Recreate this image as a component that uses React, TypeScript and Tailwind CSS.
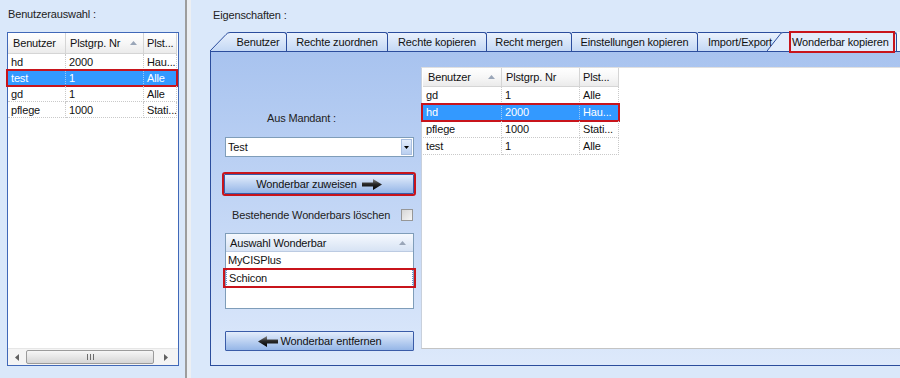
import React from "react";

type Col = { w: number; label: string; sort?: boolean; pl?: number };

function SortUp() {
  return (
    <svg width="7" height="4" viewBox="0 0 7 4" className="shrink-0">
      <path d="M0 4 L3.5 0 L7 4Z" fill="#9aa6b8" />
    </svg>
  );
}

function ArrowIcon({ dir, id }: { dir: "left" | "right"; id: string }) {
  return (
    <svg width="20" height="11" viewBox="0 0 20 11" className={dir === "left" ? "-scale-x-100" : ""}>
      <defs>
        <linearGradient id={id} x1="0" y1="0" x2="0" y2="1">
          <stop offset="0" stopColor="#8a8a8a" />
          <stop offset="0.45" stopColor="#2a2a2a" />
          <stop offset="1" stopColor="#000" />
        </linearGradient>
      </defs>
      <path d="M0 3.5 H11 V0 L20 5.5 L11 11 V7.5 H0 Z" fill={`url(#${id})`} />
    </svg>
  );
}

const leftCols: Col[] = [
  { w: 58, label: "Benutzer", pl: 5 },
  { w: 78, label: "Plstgrp. Nr", sort: true, pl: 4 },
  { w: 33, label: "Plst...", pl: 3 },
];
const leftRows = [
  ["hd", "2000", "Hau..."],
  ["test", "1", "Alle"],
  ["gd", "1", "Alle"],
  ["pflege", "1000", "Stati..."],
];

const rightCols: Col[] = [
  { w: 79, label: "Benutzer", sort: true, pl: 5 },
  { w: 78, label: "Plstgrp. Nr", pl: 4 },
  { w: 39, label: "Plst...", pl: 3 },
];
const rightRows = [
  ["gd", "1", "Alle"],
  ["hd", "2000", "Hau..."],
  ["pflege", "1000", "Stati..."],
  ["test", "1", "Alle"],
];

function GridTable({
  cols,
  rows,
  selected,
  headerH,
  rowH,
}: {
  cols: Col[];
  rows: string[][];
  selected: number;
  headerH: number;
  rowH: number;
}) {
  const total = cols.reduce((a, b) => a + b.w, 0);
  return (
    <div className="flex flex-col w-fit">
      <div className="flex" style={{ height: headerH }}>
        {cols.map((c, i) => (
          <div
            key={i}
            style={{ width: c.w, paddingLeft: c.pl }}
            className="flex items-center justify-between pr-[6px] border-r border-b border-[#d5d5d5] bg-gradient-to-b from-[#ffffff] via-[#f7f7f7] to-[#ebebeb] overflow-hidden whitespace-nowrap"
          >
            <span>{c.label}</span>
            {c.sort && <SortUp />}
          </div>
        ))}
      </div>
      {rows.map((r, ri) => {
        const sel = ri === selected;
        return (
          <div
            key={ri}
            className={`relative flex ${sel ? "bg-[#3399ff] text-white" : ""}`}
            style={{ height: rowH, width: total }}
          >
            {cols.map((c, ci) => (
              <div
                key={ci}
                style={{ width: c.w }}
                className={`flex items-center pl-[3px] border-r border-b border-dotted ${
                  sel ? "border-[#9cc9f5]" : "border-[#c9c9c9]"
                } overflow-hidden whitespace-nowrap`}
              >
                {r[ci]}
              </div>
            ))}
            {sel && (
              <div
                className="absolute -left-[2px] -top-[1px] -bottom-[1px] border-2 border-[#c8141b]"
                style={{ width: total + 3 }}
              />
            )}
          </div>
        );
      })}
    </div>
  );
}

function Tab({ label, w }: { label: string; w: number }) {
  return (
    <div
      style={{ width: w }}
      className="h-full shrink-0 flex items-center justify-center border-t border-r border-[#2b4d9d] rounded-tr-[3px] bg-gradient-to-b from-[#eaf2fd] to-[#c4d8f4] whitespace-nowrap"
    >
      {label}
    </div>
  );
}

export default function App() {
  return (
    <div className="w-[900px] h-[378px] overflow-hidden flex bg-[#dae8fa] text-[11px] leading-[14px] tracking-[-0.15px] text-[#111] font-['Liberation_Sans',Arial,sans-serif]">
      {/* Left panel */}
      <div className="w-[185px] shrink-0 pl-[7px] pt-[7px]">
        <div className="h-[14px] ml-[1px] text-[#222]">Benutzerauswahl :</div>
        <div className="mt-[11px] w-[172px] h-[334px] border border-[#4068b8] bg-white flex flex-col">
          <GridTable cols={leftCols} rows={leftRows} selected={1} headerH={21} rowH={16} />
          <div className="mt-auto h-[17px] flex items-center bg-[#f4f4f4] border-t border-[#e6e6e6]">
            <div className="w-[18px] flex justify-center">
              <svg width="4" height="7" viewBox="0 0 4 7"><path d="M4 0 L0 3.5 L4 7Z" fill="#606060" /></svg>
            </div>
            <div className="w-[128px] h-[14px] rounded-[2px] border border-[#9b9b9b] bg-gradient-to-b from-[#f6f6f6] to-[#d6d6d6] flex items-center justify-center gap-[1px]">
              <div className="w-[1px] h-[6px] bg-[#6c6c6c]" />
              <div className="w-[1px] h-[6px] bg-[#6c6c6c] ml-[1px]" />
              <div className="w-[1px] h-[6px] bg-[#6c6c6c] ml-[1px]" />
            </div>
            <div className="flex-1 flex justify-center">
              <svg width="4" height="7" viewBox="0 0 4 7"><path d="M0 0 L4 3.5 L0 7Z" fill="#606060" /></svg>
            </div>
          </div>
        </div>
      </div>

      {/* Splitter */}
      <div className="w-[2px] shrink-0 bg-[#9d9d9d]" />
      <div className="w-[4px] shrink-0 bg-[#eceff3]" />

      {/* Right panel */}
      <div className="flex-1 min-w-0 pl-[19px] pt-[8px] overflow-hidden">
        <div className="h-[14px] ml-[3px] text-[#222]">Eigenschaften :</div>
        {/* Tab strip */}
        <div className="mt-[10px] h-[19px] flex items-stretch">
          <svg width="20" height="19" viewBox="0 0 20 19" className="shrink-0">
            <defs>
              <linearGradient id="tabg" x1="0" y1="0" x2="0" y2="1">
                <stop offset="0" stopColor="#eaf2fd" />
                <stop offset="1" stopColor="#c4d8f4" />
              </linearGradient>
            </defs>
            <path d="M0 19 L16 2.5 Q17.5 0.5 20 0.5 L20 19 Z" fill="url(#tabg)" />
            <path d="M0 19 L16 2.5 Q17.5 0.5 20 0.5" fill="none" stroke="#2b4d9d" strokeWidth="1" />
          </svg>
          <Tab label="Benutzer" w={57} />
          <Tab label="Rechte zuordnen" w={101} />
          <Tab label="Rechte kopieren" w={99} />
          <Tab label="Recht mergen" w={85} />
          <Tab label="Einstellungen kopieren" w={126} />
          <Tab label="Import/Export" w={85} />
          <div className="-ml-[16px] flex h-full shrink-0">
            <svg width="16" height="19" viewBox="0 0 16 19" className="shrink-0">
              <path d="M0 19 L13 2.5 Q14 0.5 16 0.5 L16 19 Z" fill="#e2ecfb" />
              <path d="M0 19 L13 2.5 Q14 0.5 16 0.5" fill="none" stroke="#2b4d9d" strokeWidth="1" />
            </svg>
            <div className="relative w-[114px] h-full flex items-center pl-[9px] border-t border-r border-[#2b4d9d] rounded-tr-[3px] bg-[#e2ecfb] whitespace-nowrap">
              Wonderbar kopieren
              <div className="absolute left-[6px] right-[1px] -top-[2px] -bottom-[2px] border-2 border-[#c8141b]" />
            </div>
          </div>
          <div className="flex-1 bg-[#f3f7fd]" />
        </div>

        {/* Tab panel */}
        <div className="h-[315px] border border-r-0 border-[#2b4d9d] bg-gradient-to-b from-[#a8c3ef] to-[#dde9fb] flex pl-[14px] pt-[15px]">
          <div className="w-[189px] shrink-0 flex flex-col">
            <div className="mt-[44px] h-[14px] pl-[42px] text-[#222]">Aus Mandant :</div>
            <div className="mt-[12px] h-[20px] border border-[#7f9db9] bg-white flex">
              <div className="flex-1 flex items-center pl-[2px]">Test</div>
              <div className="w-[11px] my-[1px] mr-[1px] bg-gradient-to-b from-[#e4edfb] to-[#b9cff0] border border-[#a9bfe0] flex items-center justify-center">
                <svg width="5" height="3" viewBox="0 0 5 3"><path d="M0 0 H5 L2.5 3Z" fill="#000" /></svg>
              </div>
            </div>
            <div className="mt-[17px] -ml-[1px] w-[190px] h-[20px] outline-2 outline-[#c8141b] border border-[#3a5ca8] rounded-[1px] bg-gradient-to-b from-[#e4edfb] to-[#95b6e7] flex items-center justify-center gap-[5px]">
              <span>Wonderbar zuweisen</span>
              <ArrowIcon dir="right" id="ar1" />
            </div>
            <div className="mt-[13px] h-[15px] flex items-center justify-between pl-[7px] pr-[1px]">
              <span className="text-[#222]">Bestehende Wonderbars löschen</span>
              <div className="w-[12px] h-[12px] border border-[#979797] bg-gradient-to-br from-[#d6d6d6] to-[#f6f6f6]" />
            </div>
            <div className="mt-[11px] h-[76px] border border-[#7f9db9] bg-white flex flex-col">
              <div className="h-[18px] flex items-center justify-between pl-[4px] pr-[7px] border-b border-[#bccbe2] bg-gradient-to-b from-[#f6f9fe] to-[#d7e3f4]">
                <span>Auswahl Wonderbar</span>
                <SortUp />
              </div>
              <div className="h-[16px] flex items-center pl-[2px]">MyCISPlus</div>
              <div className="relative h-[18px] mt-[1px] flex items-center pl-[2px] border border-dotted border-[#6b8fd1]">
                Schicon
                <div className="absolute -left-[4px] -right-[4px] -top-[2px] -bottom-[2px] border-2 border-[#c8141b]" />
              </div>
            </div>
            <div className="mt-[22px] h-[20px] border border-[#3a5ca8] rounded-[1px] bg-gradient-to-b from-[#e4edfb] to-[#95b6e7] flex items-center justify-center gap-[3px]">
              <ArrowIcon dir="left" id="ar2" />
              <span>Wonderbar entfernen</span>
            </div>
          </div>

          <div className="ml-[7px] flex-1 h-[282px] bg-white border-l border-t border-b border-l-[#c8d0dc] border-t-[#e0e0e0] border-b-[#c4c4c4] pl-[1px]">
            <GridTable cols={rightCols} rows={rightRows} selected={1} headerH={19} rowH={17} />
          </div>
        </div>
      </div>
    </div>
  );
}
